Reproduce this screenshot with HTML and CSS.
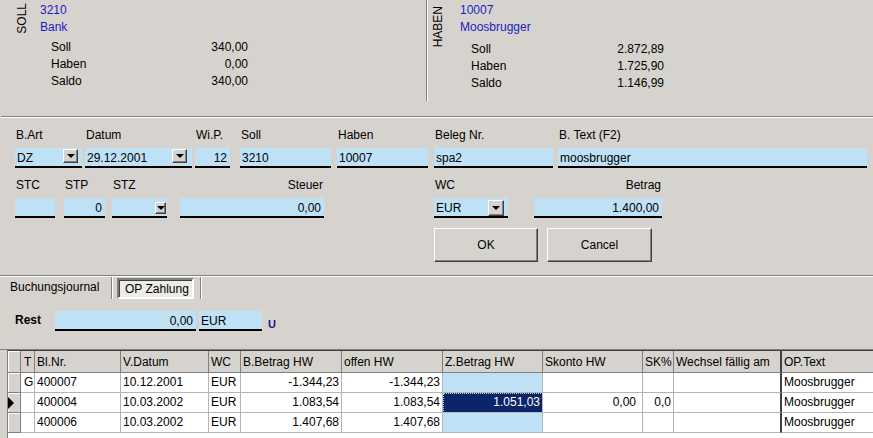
FILE: index.html
```html
<!DOCTYPE html>
<html>
<head>
<meta charset="utf-8">
<title>OP Zahlung</title>
<link rel="stylesheet" href="styles.css">
</head>
<body>
<div class="top">
  <div class="acct acct-l">
    <div class="vlabel vl-soll">SOLL</div>
    <div class="acct-body">
      <div class="num">3210</div>
      <div class="name">Bank</div>
      <div class="stats stats-l">
        <span>Soll</span><span class="v">340,00</span>
        <span>Haben</span><span class="v">0,00</span>
        <span>Saldo</span><span class="v">340,00</span>
      </div>
    </div>
  </div>
  <div class="acct acct-r">
    <div class="vlabel vl-haben">HABEN</div>
    <div class="acct-body acct-body-r">
      <div class="num">10007</div>
      <div class="name">Moosbrugger</div>
      <div class="stats stats-r">
        <span>Soll</span><span class="v">2.872,89</span>
        <span>Haben</span><span class="v">1.725,90</span>
        <span>Saldo</span><span class="v">1.146,99</span>
      </div>
    </div>
  </div>
</div>
<div class="sep sep1"></div>

<div class="form">
  <div class="row">
    <div class="fld f-bart"><div class="lbl">B.Art</div><div class="inp"><span class="txt">DZ</span><span class="dd dd-bart"></span></div></div>
    <div class="fld f-datum"><div class="lbl">Datum</div><div class="inp"><span class="txt">29.12.2001</span><span class="dd dd-datum"></span></div></div>
    <div class="fld f-wip"><div class="lbl">Wi.P.</div><div class="inp"><span class="txt r">12</span></div></div>
    <div class="fld f-soll"><div class="lbl">Soll</div><div class="inp"><span class="txt">3210</span></div></div>
    <div class="fld f-haben"><div class="lbl">Haben</div><div class="inp"><span class="txt">10007</span></div></div>
    <div class="fld f-beleg"><div class="lbl">Beleg Nr.</div><div class="inp"><span class="txt">spa2</span></div></div>
    <div class="fld f-btext"><div class="lbl">B. Text (F2)</div><div class="inp"><span class="txt">moosbrugger</span></div></div>
  </div>
  <div class="row row2">
    <div class="fld f-stc"><div class="lbl">STC</div><div class="inp"><span class="txt"></span></div></div>
    <div class="fld f-stp"><div class="lbl">STP</div><div class="inp"><span class="txt r">0</span></div></div>
    <div class="fld f-stz"><div class="lbl">STZ</div><div class="inp"><span class="txt"></span><span class="dd dd-stz"></span></div></div>
    <div class="fld f-steuer"><div class="lbl r">Steuer</div><div class="inp"><span class="txt r">0,00</span></div></div>
    <div class="fld f-wc"><div class="lbl">WC</div><div class="inp"><span class="txt">EUR</span><span class="dd dd-wc"></span></div></div>
    <div class="fld f-betrag"><div class="lbl r">Betrag</div><div class="inp"><span class="txt r">1.400,00</span></div></div>
  </div>
  <div class="btns">
    <div class="btn btn-ok">OK</div>
    <div class="btn btn-cancel">Cancel</div>
  </div>
</div>

<div class="sep sep3"></div>

<div class="tabs">
  <div class="tab1">Buchungsjournal</div>
  <div class="vsep"></div>
  <div class="tab2">OP Zahlung</div>
  <div class="vsep vsep2"></div>
</div>

<div class="rest">
  <div class="rest-lbl">Rest</div>
  <div class="inp rest-val"><span class="txt r">0,00</span></div>
  <div class="inp rest-cur"><span class="txt">EUR</span></div>
  <div class="u">U</div>
</div>

<div class="sep2"></div>

<div class="grid">
  <div class="gr gh">
    <div class="ind"></div><div class="ct">T</div><div>Bl.Nr.</div><div>V.Datum</div><div>WC</div><div>B.Betrag HW</div><div>offen HW</div><div>Z.Betrag HW</div><div>Skonto HW</div><div>SK%</div><div class="wf">Wechsel fällig am</div><div class="last">OP.Text</div>
  </div>
  <div class="gr">
    <div class="ind"></div><div class="ct">G</div><div>400007</div><div>10.12.2001</div><div>EUR</div><div class="r">-1.344,23</div><div class="r">-1.344,23</div><div class="bl"></div><div class="r sk"></div><div class="r"></div><div class="wf"></div><div class="last">Moosbrugger</div>
  </div>
  <div class="gr">
    <div class="ind cur"><span class="tri"></span></div><div class="ct"></div><div>400004</div><div>10.03.2002</div><div>EUR</div><div class="r">1.083,54</div><div class="r">1.083,54</div><div class="r sel">1.051,03</div><div class="r sk">0,00</div><div class="r">0,0</div><div class="wf"></div><div class="last">Moosbrugger</div>
  </div>
  <div class="gr">
    <div class="ind"></div><div class="ct"></div><div>400006</div><div>10.03.2002</div><div>EUR</div><div class="r">1.407,68</div><div class="r">1.407,68</div><div class="bl"></div><div class="r sk"></div><div class="r"></div><div class="wf"></div><div class="last">Moosbrugger</div>
  </div>
</div>
</body>
</html>
```
FILE: styles.css
```css
* { box-sizing: border-box; }
html, body { margin: 0; padding: 0; }
body {
  width: 873px;
  height: 438px;
  overflow: hidden;
  background: #d6d3ce;
  font: 12px/15px "Liberation Sans", Arial, sans-serif;
  color: #000;
}

/* ---------- top accounts ---------- */
.top { display: flex; height: 101px; }
.acct { display: flex; align-items: flex-start; }
.acct-l { width: 426px; }
.acct-r {
  flex: 1;
  height: 101px;
  border-left: 1px solid #808080;
  box-shadow: inset 1px 0 #fff;
}
.vlabel {
  writing-mode: vertical-rl;
  transform: rotate(180deg);
  width: 14px;
  line-height: 14px;
  white-space: nowrap;
}
.vl-soll { margin: 3px 0 0 15px; }
.vl-haben { margin: 6px 0 0 4px; }
.acct-body { padding-top: 2px; line-height: 17px; margin-left: 11px; }
.acct-body-r { margin-left: 15px; }
.num, .name { color: #1c1cc4; }
.stats {
  display: grid;
  grid-template-columns: 1fr auto;
  line-height: 17px;
}
.stats .v { text-align: right; }
.stats-l { margin: 3px 0 0 11px; width: 197px; }
.stats-r { margin: 5px 0 0 11px; width: 193px; }

.sep {
  margin-left: 1px;
  border-top: 1px solid #808080;
  border-bottom: 1px solid #fff;
}
.sep1 { margin-top: 15px; }

/* ---------- form ---------- */
.form { padding-top: 10px; }
.row { display: flex; align-items: flex-start; }
.row2 { margin-top: 10px; }
.lbl {
  height: 15px;
  line-height: 15px;
  margin-bottom: 5px;
  padding-left: 1px;
  white-space: nowrap;
}
.lbl.r { text-align: right; padding: 0 1px 0 0; }
.inp {
  display: flex;
  align-items: flex-start;
  height: 20px;
  background: #bfe1f6;
  border-bottom: 2px solid #000;
}
.txt {
  flex: 1;
  min-width: 0;
  padding: 3px 3px 0 2px;
  line-height: 15px;
  white-space: nowrap;
  overflow: hidden;
}
.txt.r { text-align: right; }

.dd {
  position: relative;
  flex: none;
  width: 15px;
  height: 14px;
  margin: 1px 4px 0 0;
  background: #d6d3ce;
  border: 1px solid;
  border-color: #fff #404040 #404040 #fff;
  box-shadow: inset -1px -1px #808080;
}
.dd::after {
  content: "";
  position: absolute;
  left: 50%;
  top: 50%;
  margin: -2px 0 0 -4px;
  border-top: 4px solid #000;
  border-left: 4px solid transparent;
  border-right: 4px solid transparent;
}
.dd-datum { margin-right: 5px; }
.dd-stz { width: 11px; height: 12px; margin: 4px 1px 0 0; }
.dd-wc { width: 16px; height: 16px; margin: 2px 4px 0 0; }

.f-bart { margin-left: 15px; width: 67px; }
.f-datum { margin-left: 3px; width: 107px; }
.f-wip { margin-left: 3px; width: 35px; }
.f-soll { margin-left: 10px; width: 91px; }
.f-haben { margin-left: 6px; width: 91px; }
.f-beleg { margin-left: 6px; width: 119px; }
.f-btext { margin-left: 5px; width: 309px; }

.f-stc { margin-left: 15px; width: 40px; }
.f-stp { margin-left: 9px; width: 41px; }
.f-stz { margin-left: 7px; width: 55px; }
.f-steuer { margin-left: 13px; width: 144px; }
.f-wc { margin-left: 110px; width: 74px; }
.f-betrag { margin-left: 26px; width: 128px; }

.btns { display: flex; gap: 9px; margin: 10px 0 0 434px; }
.btn {
  display: flex;
  align-items: center;
  justify-content: center;
  height: 34px;
  background: #d6d3ce;
  border: 1px solid;
  border-color: #fff #404040 #404040 #fff;
  box-shadow: inset -1px -1px #808080;
}
.btn-ok { width: 104px; }
.btn-cancel { width: 105px; }

.sep3 { margin-top: 13px; margin-left: 0; }

/* ---------- tabs ---------- */
.tabs {
  display: flex;
  align-items: flex-start;
  height: 23px;
  padding-left: 10px;
}
.tab1 { width: 101px; padding-top: 3px; white-space: nowrap; }
.vsep {
  width: 2px;
  height: 22px;
  border-left: 1px solid #808080;
  border-right: 1px solid #fff;
}
.tab2 {
  width: 77px;
  height: 21px;
  margin: 1px 0 0 4px;
  padding: 2px 0 0 6px;
  white-space: nowrap;
  background: #ecebe7;
  border: 2px solid;
  border-color: #808080 #fff #fff #808080;
  box-shadow: inset 1px 1px #404040;
}
.vsep2 { margin-left: 6px; }

/* ---------- rest ---------- */
.rest { display: flex; align-items: flex-start; margin-top: 11px; }
.rest-lbl { font-weight: bold; width: 40px; margin-left: 15px; padding-top: 2px; }
.rest-val { width: 141px; }
.rest-cur { width: 63px; margin-left: 3px; }
.u {
  margin: 6px 0 0 6px;
  font-weight: bold;
  font-size: 11px;
  line-height: 15px;
  color: #141494;
}

.sep2 { margin-top: 17px; border-top: 1px solid #808080; }

/* ---------- grid ---------- */
.grid {
  margin-left: 7px;
  height: 89px;
  background: #fff;
  border-left: 1px solid #808080;
  border-top: 1px solid #404040;
}
.gr {
  display: grid;
  grid-template-columns: 13px 14px 86px 88px 32px 101px 101px 100px 100px 31px 108px 1fr;
}
.gr > div {
  height: 20px;
  padding: 2px 2px 0 2px;
  line-height: 15px;
  white-space: nowrap;
  overflow: hidden;
  border-right: 1px solid #b4b4b4;
  border-bottom: 1px solid #b4b4b4;
}
.gh > div {
  height: 22px;
  padding-top: 4px;
  background: #d6d3ce;
  border-color: #808080;
}
.gr > .ct { padding-left: 3px; }
.gr > .r { text-align: right; }
.gr > .sk { padding-right: 6px; }
.gr > .wf { border-right: 2px solid #404040; }
.gr > .last { border-right: 0; }
.gr > .ind {
  padding: 0;
  background: #d6d3ce;
  border-color: #808080;
  box-shadow: inset 1px 1px #fff;
}
.gr > .bl { background: #bfe1f6; }
.gr > .sel {
  background: #0c2468;
  color: #fff;
  outline: 1px dotted #c8c8c8;
  outline-offset: -1px;
}
.tri {
  display: block;
  width: 0;
  height: 0;
  margin-top: 4px;
  border-left: 6px solid #000;
  border-top: 6px solid transparent;
  border-bottom: 6px solid transparent;
}
```
